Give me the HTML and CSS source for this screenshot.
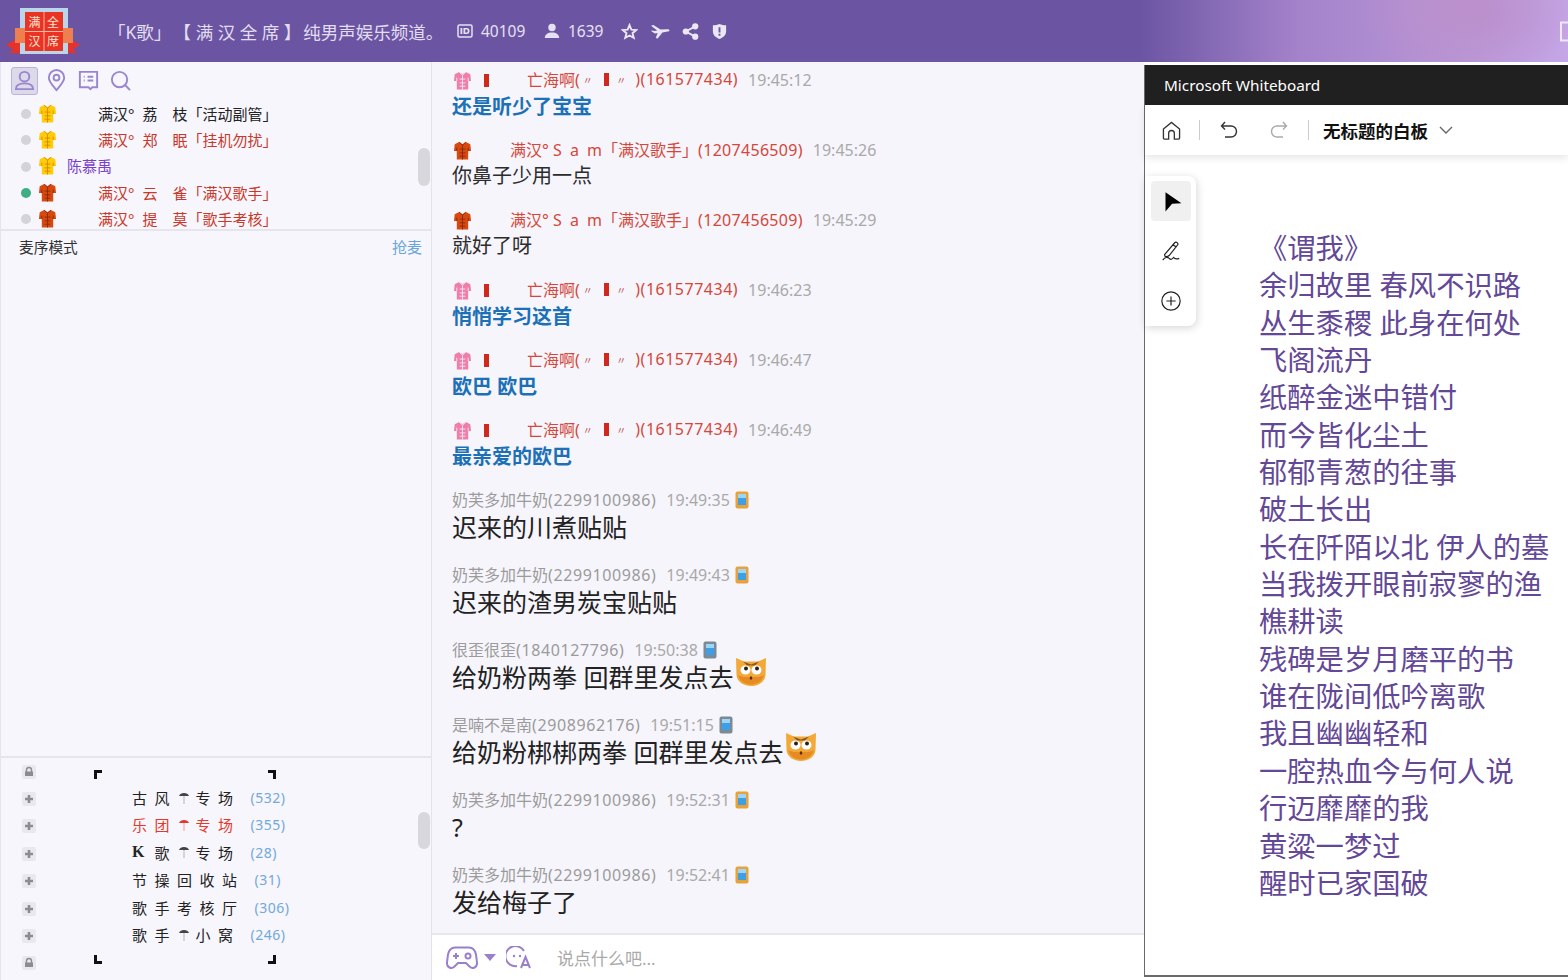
FILE: index.html
```html
<!DOCTYPE html>
<html lang="zh-CN">
<head>
<meta charset="utf-8">
<title>满汉全席</title>
<link rel="stylesheet" href="styles.css">
</head>
<body>
<svg class="defs" width="0" height="0" aria-hidden="true">
  <symbol id="shirt" viewBox="0 0 20 20">
    <path class="s-body" d="M6.500 1 1.800 3.500 1 10.500h3V19.500h12V10.500h3l-.8-7L13.500 1 10 3.500z"/>
    <path class="s-line" d="M6.500 1 10 4.500 13.500 1M10 4.500v15M4 7v3.500M16 7v3.500M7 8.500h6M7 12.500h6M7 16h6" fill="none"/>
  </symbol>
  <symbol id="phone" viewBox="0 0 14 18">
    <rect class="p-edge" x=".5" y=".5" width="13" height="17" rx="2"/>
    <rect x="3" y="3" width="8" height="11" fill="#3f9fe6"/>
    <rect x="3" y="3" width="8" height="4" fill="#9dd5f7"/>
  </symbol>
  <symbol id="cat" viewBox="0 0 32 30">
    <path d="M1 1 9 4.500h14L31 1l-.5 17C30 25 23 29 16 29S2 25 1.500 18z" fill="#f2a93a"/>
    <path d="M3 18c2 7 8 9.500 13 9.500S27 25 29 18c-3 3-23 3-26 0z" fill="#e68a22"/>
    <path d="M8 4.500l8 3 8-3-4 4h-8z" fill="#8a5a1c"/>
    <ellipse cx="10.500" cy="13" rx="5" ry="4.500" fill="#fff"/><ellipse cx="21.500" cy="13" rx="5" ry="4.500" fill="#fff"/>
    <circle cx="11" cy="11.500" r="2" fill="#2a2018"/><circle cx="22" cy="11.500" r="2" fill="#2a2018"/>
    <ellipse cx="16" cy="21" rx="1.300" ry="1.800" fill="#5b2d0a"/>
  </symbol>
  <symbol id="plus" viewBox="0 0 14 14">
    <rect width="14" height="14" rx="2" fill="#e9e8ee"/>
    <path d="M7 3v8M3 7h8" stroke="#8c8c90" stroke-width="2.600"/>
  </symbol>
  <symbol id="lock" viewBox="0 0 14 14">
    <rect width="14" height="14" rx="2" fill="#e9e8ee"/>
    <path d="M4.500 7V5a2.500 2.500 0 0 1 5 0v2" fill="none" stroke="#8c8c90" stroke-width="1.400"/>
    <rect x="3" y="6.500" width="8" height="4.500" fill="#8c8c90"/>
  </symbol>
  <symbol id="brolly" viewBox="0 0 12 16">
    <path class="b-top" d="M1 6C2 2 10 2 11 6z"/>
    <path class="b-pole" d="M6 6v8" stroke-width="1.400"/>
  </symbol>
</svg>

<header class="topbar">
  <svg class="logo" viewBox="0 0 76 50" aria-label="满汉全席">
    <path d="M1 39 11 33l8 4v11l-8-1H4l4-4z" fill="#e5322a"/>
    <path d="M75 39 65 33l-8 4v11l8-1h7l-4-4z" fill="#e5322a"/>
    <rect x="15" y="2" width="48" height="46" fill="#b9d6ea"/>
    <rect x="20" y="6" width="38" height="39" fill="#ea3322"/>
    <path d="M39 6v39M20 25.500h38" stroke="#f5b9a8" stroke-width="1"/>
    <rect x="10" y="22" width="10" height="15" fill="#ee7f4e"/>
    <rect x="58" y="22" width="10" height="15" fill="#ee7f4e"/>
    <g class="logo-text">
      <text x="29.500" y="21">满</text><text x="48" y="21">全</text>
      <text x="29.500" y="40">汉</text><text x="48" y="40">席</text>
    </g>
  </svg>
  <h1 class="title">「K歌」<span class="title-b">【 满 汉 全 席 】</span><span class="title-c">纯男声娱乐频道。</span></h1>
  <div class="stat stat-id">
    <svg class="hicon" viewBox="0 0 16 16"><rect class="id-frame" x="1" y="2" width="14" height="12" rx="1.500"/><path d="M3.500 5h1.800v6H3.500zM6.500 5h3c2 0 3 1.300 3 3s-1 3-3 3h-3zM8.200 6.500v3h1.300c.9 0 1.300-.6 1.300-1.500s-.4-1.500-1.300-1.500z" fill-rule="evenodd"/></svg>
    <span>40109</span>
  </div>
  <div class="stat stat-user">
    <svg class="hicon" viewBox="0 0 16 16"><circle cx="8" cy="4.500" r="3.700"/><path d="M.8 15c0-3.500 3-5.500 7.200-5.500s7.200 2 7.200 5.500z"/></svg>
    <span>1639</span>
  </div>
  <div class="actions">
    <svg class="aicon" viewBox="0 0 18 18"><path d="M9 2.200 11 7l5.200.4-4 3.400 1.300 5L9 13.200 4.500 15.800l1.300-5-4-3.400L7 7z" fill="none" stroke="currentColor" stroke-width="2"/></svg>
    <svg class="aicon plane" viewBox="0 0 22 18"><path d="M1 3 3.500 2 11 7l7-.5c3 0 3.500 2 .5 2.500l-5.500 1-5 6.500-2-.5 2-5.500-3 .5L1 8.500 2 8l2.700.4L7.500 8z"/></svg>
    <svg class="aicon" viewBox="0 0 18 18"><circle cx="14" cy="3.500" r="3.300"/><circle cx="4" cy="9" r="3.300"/><circle cx="14" cy="14.500" r="3.300"/><path d="M14 3.500 4 9l10 5.500" fill="none" stroke="currentColor" stroke-width="2"/></svg>
    <svg class="aicon" viewBox="0 0 16 18"><path fill-rule="evenodd" d="M8 1c2 1 4.500 1.500 7 1.500V9c0 4-3.500 6.500-7 8-3.500-1.500-7-4-7-8V2.500C3.500 2.500 6 2 8 1zM7 4.500v5.500h2V4.500zM7 11.500v2h2v-2z"/></svg>
  </div>
  <svg class="cut-icon" viewBox="0 0 16 20"><path d="M15 1H1v18h14" fill="none" stroke="currentColor" stroke-width="2"/></svg>
</header>

<main class="layout">
  <aside class="side">
    <nav class="tabs">
      <span class="tab tab-on"><svg viewBox="0 0 24 24"><circle cx="12" cy="8" r="5"/><path d="M3 21c0-4 3-6 9-6s9 2 9 6z"/></svg></span>
      <span class="tab"><svg viewBox="0 0 24 24"><path d="M12 22C7 16 4 13 4 9a8 8 0 0 1 16 0c0 4-3 7-8 13z"/><circle cx="12" cy="9" r="3"/></svg></span>
      <span class="tab"><svg viewBox="0 0 24 24"><path d="M3 3h18v16h-5l-2 2-2-2H3z"/><path d="M7 8h1M11 8h6M7 12h1M11 12h6"/></svg></span>
      <span class="tab"><svg viewBox="0 0 24 24"><circle cx="11" cy="11" r="8"/><path d="M17 17l5 5"/></svg></span>
    </nav>
    <ul class="users">
      <li class="user"><i class="dot"></i><svg class="shirt gold"><use href="#shirt"/></svg><span class="uname">满汉°<span class="nick">荔　枝</span>「活动副管」</span></li>
      <li class="user red"><i class="dot"></i><svg class="shirt gold"><use href="#shirt"/></svg><span class="uname">满汉°<span class="nick">郑　眠</span>「挂机勿扰」</span></li>
      <li class="user violet"><i class="dot"></i><svg class="shirt gold"><use href="#shirt"/></svg><span class="uname plain">陈慕禹</span></li>
      <li class="user red"><i class="dot live"></i><svg class="shirt rust"><use href="#shirt"/></svg><span class="uname">满汉°<span class="nick">云　雀</span>「满汉歌手」</span></li>
      <li class="user red"><i class="dot"></i><svg class="shirt rust"><use href="#shirt"/></svg><span class="uname">满汉°<span class="nick">提　莫</span>「歌手考核」</span></li>
    </ul>
    <i class="thumb thumb-users"></i>
    <section class="queue">
      <div class="queue-head"><span>麦序模式</span><a class="grab">抢麦</a></div>
    </section>
    <section class="tree">
      <div class="branch"><svg class="node"><use href="#lock"/></svg><div class="frame frame-top"><i class="corner c-tl"></i><i class="corner c-tr"></i></div></div>
      <div class="branch"><svg class="node"><use href="#plus"/></svg><span class="ch">古风<svg class="brolly"><use href="#brolly"/></svg>专场</span><span class="cnt">(532)</span></div>
      <div class="branch hot"><svg class="node"><use href="#plus"/></svg><span class="ch">乐团<svg class="brolly"><use href="#brolly"/></svg>专场</span><span class="cnt">(355)</span></div>
      <div class="branch"><svg class="node"><use href="#plus"/></svg><span class="ch"><b class="k">K</b>歌<svg class="brolly"><use href="#brolly"/></svg>专场</span><span class="cnt">(28)</span></div>
      <div class="branch"><svg class="node"><use href="#plus"/></svg><span class="ch">节操回收站</span><span class="cnt">(31)</span></div>
      <div class="branch"><svg class="node"><use href="#plus"/></svg><span class="ch">歌手考核厅</span><span class="cnt">(306)</span></div>
      <div class="branch"><svg class="node"><use href="#plus"/></svg><span class="ch">歌手<svg class="brolly"><use href="#brolly"/></svg>小窝</span><span class="cnt">(246)</span></div>
      <div class="branch"><svg class="node"><use href="#lock"/></svg><div class="frame frame-end"><i class="corner c-bl"></i><i class="corner c-br"></i></div></div>
      <i class="thumb thumb-tree"></i>
    </section>
  </aside>

  <section class="chat">
    <div class="log">
      <article class="msg"><div class="head red-h"><svg class="shirt pink"><use href="#shirt"/></svg><i class="rbar"></i><span class="who who-hai">亡海啊(<small class="ditto">〃</small><i class="rbar"></i><small class="ditto">〃</small><span class="qq">)(161577434)</span></span><time>19:45:12</time></div><p class="txt bold">还是听少了宝宝</p></article>
      <article class="msg"><div class="head red-h"><svg class="shirt rust"><use href="#shirt"/></svg><span class="who who-sam">满汉° <span class="sam">S a m</span>「满汉歌手」<span class="qq">(1207456509)</span></span><time>19:45:26</time></div><p class="txt">你鼻子少用一点</p></article>
      <article class="msg"><div class="head red-h"><svg class="shirt rust"><use href="#shirt"/></svg><span class="who who-sam">满汉° <span class="sam">S a m</span>「满汉歌手」<span class="qq">(1207456509)</span></span><time>19:45:29</time></div><p class="txt">就好了呀</p></article>
      <article class="msg"><div class="head red-h"><svg class="shirt pink"><use href="#shirt"/></svg><i class="rbar"></i><span class="who who-hai">亡海啊(<small class="ditto">〃</small><i class="rbar"></i><small class="ditto">〃</small><span class="qq">)(161577434)</span></span><time>19:46:23</time></div><p class="txt bold">悄悄学习这首</p></article>
      <article class="msg"><div class="head red-h"><svg class="shirt pink"><use href="#shirt"/></svg><i class="rbar"></i><span class="who who-hai">亡海啊(<small class="ditto">〃</small><i class="rbar"></i><small class="ditto">〃</small><span class="qq">)(161577434)</span></span><time>19:46:47</time></div><p class="txt bold">欧巴 欧巴</p></article>
      <article class="msg"><div class="head red-h"><svg class="shirt pink"><use href="#shirt"/></svg><i class="rbar"></i><span class="who who-hai">亡海啊(<small class="ditto">〃</small><i class="rbar"></i><small class="ditto">〃</small><span class="qq">)(161577434)</span></span><time>19:46:49</time></div><p class="txt bold">最亲爱的欧巴</p></article>
      <article class="msg big"><div class="head"><span class="who">奶芙多加牛奶<span class="qq">(2299100986)</span></span><time>19:49:35</time><svg class="phone orange"><use href="#phone"/></svg></div><p class="txt">迟来的川煮贴贴</p></article>
      <article class="msg big"><div class="head"><span class="who">奶芙多加牛奶<span class="qq">(2299100986)</span></span><time>19:49:43</time><svg class="phone orange"><use href="#phone"/></svg></div><p class="txt">迟来的渣男炭宝贴贴</p></article>
      <article class="msg big"><div class="head"><span class="who">很歪很歪<span class="qq">(1840127796)</span></span><time>19:50:38</time><svg class="phone"><use href="#phone"/></svg></div><p class="txt">给奶粉两拳 回群里发点去<svg class="cat"><use href="#cat"/></svg></p></article>
      <article class="msg big"><div class="head"><span class="who">是喃不是南<span class="qq">(2908962176)</span></span><time>19:51:15</time><svg class="phone"><use href="#phone"/></svg></div><p class="txt">给奶粉梆梆两拳 回群里发点去<svg class="cat"><use href="#cat"/></svg></p></article>
      <article class="msg big"><div class="head"><span class="who">奶芙多加牛奶<span class="qq">(2299100986)</span></span><time>19:52:31</time><svg class="phone orange"><use href="#phone"/></svg></div><p class="txt">?</p></article>
      <article class="msg big"><div class="head"><span class="who">奶芙多加牛奶<span class="qq">(2299100986)</span></span><time>19:52:41</time><svg class="phone orange"><use href="#phone"/></svg></div><p class="txt">发给梅子了</p></article>
    </div>
    <footer class="composer">
      <svg class="pad" viewBox="0 0 32 24"><path d="M9 1.500h14c4 0 6 2.500 7 7l1 8c.5 5-4.500 7-7.500 4L20 17h-8l-3.500 3.500C5.500 23.500.5 21.500 1 16.500l1-8c1-4.500 3-7 7-7z"/><path d="M7 10h6M10 7v6"/><circle cx="22" cy="10" r="2.500"/></svg>
      <i class="caret"></i>
      <svg class="trans" viewBox="0 0 26 24"><path d="M18 5A10 10 0 1 0 11 20"/><circle cx="8" cy="10" r="1.200" class="fill"/><circle cx="14" cy="10" r="1.200" class="fill"/><path d="M15 22 19.500 11 24 22M16.500 19h6"/></svg>
      <span class="placeholder">说点什么吧...</span>
    </footer>
  </section>

  <section class="board">
    <div class="wb-title">Microsoft Whiteboard</div>
    <div class="wb-bar">
      <svg class="wb-i home" viewBox="0 0 20 20"><path d="M1.500 8.500 10 1.500l8.500 7V18a1 1 0 0 1-1 1H13v-6a3 3 0 0 0-6 0v6H2.500a1 1 0 0 1-1-1z"/></svg>
      <i class="wb-sep"></i>
      <svg class="wb-i undo" viewBox="0 0 18 18"><path d="M5 1 1.500 5 5 8.500M1.500 5H11a5.500 5.500 0 0 1 0 11H5"/></svg>
      <svg class="wb-i redo" viewBox="0 0 18 18"><path d="M13 1l3.500 4L13 8.500M16.500 5H7a5.500 5.500 0 0 0 0 11h6"/></svg>
      <i class="wb-sep sep2"></i>
      <strong class="wb-name">无标题的白板</strong>
      <svg class="wb-i chev" viewBox="0 0 14 8"><path d="M1 1l6 6 6-6"/></svg>
    </div>
    <div class="canvas">
      <div class="tools">
        <span class="tool tool-on"><svg viewBox="0 0 20 20"><path class="solid" d="M5 2l14.500 10-8.500.5L5 19.500z"/></svg></span>
        <span class="tool"><svg viewBox="0 0 24 24"><path d="M5 16 16 3c1.500-1.500 4 0 3.500 2L10 17c-2 1.500-5 2-5-1zM14 5l4 3M3 22c2-3 5-4 7-2s3 1 5-1c1 2 3 2 6 1"/></svg></span>
        <span class="tool"><svg viewBox="0 0 24 24"><circle cx="12" cy="12" r="10"/><path d="M12 7v10M7 12h10"/></svg></span>
      </div>
      <div class="poem">
        <div>《谓我》</div>
        <div>余归故里 春风不识路</div>
        <div>丛生黍稷 此身在何处</div>
        <div>飞阁流丹</div>
        <div>纸醉金迷中错付</div>
        <div>而今皆化尘土</div>
        <div>郁郁青葱的往事</div>
        <div>破土长出</div>
        <div>长在阡陌以北 伊人的墓</div>
        <div>当我拨开眼前寂寥的渔</div>
        <div>樵耕读</div>
        <div>残碑是岁月磨平的书</div>
        <div>谁在陇间低吟离歌</div>
        <div>我且幽幽轻和</div>
        <div>一腔热血今与何人说</div>
        <div>行迈靡靡的我</div>
        <div>黄粱一梦过</div>
        <div>醒时已家国破</div>
      </div>
    </div>
  </section>
</main>
</body>
</html>
```

FILE: styles.css
```css
* { box-sizing: border-box; }
html, body { margin: 0; height: 100%; }
body {
  width: 1568px;
  height: 980px;
  overflow: hidden;
  display: flex;
  flex-direction: column;
  background: #fff;
  color: #222;
  font-family: "Noto Sans", "Noto Sans CJK SC", sans-serif;
}
.defs { position: absolute; }
ul, p, h1 { margin: 0; padding: 0; }
i { display: block; }

/* top bar */
.topbar {
  flex: none;
  height: 62px;
  display: flex;
  align-items: center;
  color: #e6e1f2;
  background:
    radial-gradient(ellipse 110px 70px at 1470px 10px, #bb8fca 0%, rgba(187,143,202,0) 100%),
    linear-gradient(90deg, #6b55a3 0, #6b55a3 1140px, #7a61ad 1180px, #a583cb 1300px, #b795d6 1450px, #c5a6e6 1568px);
}
.logo { flex: none; align-self: flex-start; width: 76px; height: 50px; margin-left: 5px; margin-top: 6px; }
.logo-text text { font-size: 12px; fill: #fbe3d6; text-anchor: middle; }
.title {
  margin-left: 27px;
  width: 347px;
  font-size: 17.500px;
  font-weight: 400;
  white-space: nowrap;
  color: #e2ddf0;
}
.title-b { margin-left: 11px; }
.title-c { margin-left: 2px; }
.stat { display: flex; align-items: center; font-size: 15.500px; }
.hicon { width: 16px; height: 16px; fill: currentColor; margin-right: 8px; }
.id-frame { fill: none; stroke: currentColor; stroke-width: 1.500; }
.stat-id { margin-left: 2px; width: 87px; }
.stat-user { width: 77px; }
.actions { display: flex; align-items: center; gap: 11.500px; color: #ebe7f5; }
.aicon { width: 17px; height: 17px; fill: currentColor; }
.plane { width: 21px; }
.cut-icon { position: absolute; left: 1560px; top: 21px; width: 16px; height: 21px; color: #efe6fa; }

.layout { flex: 1; display: flex; min-height: 0; }

/* left column */
.side {
  position: relative;
  flex: none;
  width: 432px;
  display: flex;
  flex-direction: column;
  background: #f7f6fc;
  border-left: 1px solid #e6e4ee;
  border-right: 1px solid #e4e3ea;
}
.tabs { display: flex; align-items: center; gap: 5px; height: 34px; padding: 3px 0 0 10px; }
.tab { width: 27px; height: 28px; display: flex; align-items: center; justify-content: center; border-radius: 3px; }
.tab svg { width: 23px; height: 23px; fill: none; stroke: #9a86cf; stroke-width: 2; }
.tab-on { background: #dcd9e8; border: 1px solid #bdb2dd; }
.users { list-style: none; height: 135px; padding-top: 5px; overflow: hidden; border-bottom: 2px solid #e6e5ec; }
.user { display: flex; align-items: center; height: 26.300px; font-size: 15px; color: #222; }
.user.red { color: #c8392b; }
.user.violet { color: #7a3fc8; }
.dot { flex: none; width: 10px; height: 10px; margin-left: 20px; border-radius: 50%; background: #d4d3d8; }
.dot.live { background: #3eae84; }
.shirt { flex: none; width: 19px; height: 19px; }
.user .shirt { margin: 0 0 2px 7px; }
.s-body { fill: var(--shirt-fill); }
.s-line { stroke: var(--shirt-line); stroke-width: 1; }
.gold { --shirt-fill: #ffcc0a; --shirt-line: #d88a00; }
.rust { --shirt-fill: #d8490f; --shirt-line: #8c2a08; }
.pink { --shirt-fill: #ee7faa; --shirt-line: #fbe3ec; }
.uname { margin: 0 0 2px 41px; white-space: nowrap; }
.uname.plain { margin-left: 10px; }
.nick { margin-left: 8px; }
.thumb { position: absolute; left: 417px; width: 12px; border-radius: 6px; background: #d8d7dc; }
.thumb-users { top: 86px; height: 38px; }
.queue { flex: 1; border-bottom: 2px solid #e6e5ec; }
.queue-head { display: flex; justify-content: space-between; align-items: center; padding: 5px 9px 0 18px; font-size: 14.700px; color: #333; }
.grab { color: #6aa6da; font-size: 15px; }
.tree { position: relative; flex: none; height: 222px; }
.branch { display: flex; align-items: center; height: 27.400px; font-size: 15px; color: #222; white-space: nowrap; }
.branch.hot { color: #e5392c; }
.node { flex: none; width: 14px; height: 14px; margin-left: 21px; }
.ch { margin: 0 0 3px 96px; letter-spacing: 7.500px; display: flex; align-items: center; }
.k { font-family: "Liberation Serif", serif; font-weight: 700; font-size: 16px; width: 22.500px; letter-spacing: 0; }
.brolly { width: 12px; height: 16px; margin: 0 5.500px 0 1px; }
.b-top { fill: var(--brolly-top, #444); }
.b-pole { stroke: var(--brolly-pole, #c6c6c6); }
.hot { --brolly-top: #e5392c; --brolly-pole: #f2b7b0; }
.cnt { margin: 0 0 3px 10px; font-size: 14px; letter-spacing: .5px; color: #72a9d8; }
.frame { display: flex; justify-content: space-between; width: 182px; margin-left: 58px; }
.frame-top { margin-top: 5px; }
.frame-end { margin-top: -7px; }
.corner { width: 8px; height: 9px; border: 0 solid #111; }
.c-tl { border-width: 3px 0 0 3px; }
.c-tr { border-width: 3px 3px 0 0; }
.c-bl { border-width: 0 0 3px 3px; }
.c-br { border-width: 0 3px 3px 0; }
.thumb-tree { top: 54px; height: 37px; }

/* chat */
.chat { flex: none; width: 712px; display: flex; flex-direction: column; background: #f6f5fb; }
.log { flex: 1; padding: 5px 0 0 20px; overflow: hidden; }
.msg { height: 70px; }
.msg.big { height: 75px; }
.head { display: flex; align-items: center; height: 26px; font-size: 16px; color: #9b9b9b; white-space: nowrap; }
.red-h { color: #d5473a; }
.who { margin-bottom: 2px; }
.head time { margin-left: 10px; color: #a9a9a9; }
.head .shirt { margin-left: 1px; }
.rbar { width: 5px; height: 13px; background: #d0281c; }
.head > .rbar { margin-left: 12px; }
.who-hai { display: flex; align-items: center; margin-left: 38px; }
.who-sam { margin-left: 38px; }
.sam { word-spacing: 4px; }
.qq { letter-spacing: .6px; }
.red-h .qq { letter-spacing: .3px; }
.red-h .who-hai .qq { letter-spacing: .5px; margin-left: .5px; }
.ditto { font-size: 10px; margin: 0 11px 0 3px; color: #b55; }
.rbar + .ditto { margin: 0 8.500px 0 7.500px; }
.txt { font-size: 20px; line-height: 26px; color: #2c2c2c; white-space: nowrap; }
.big .txt { font-size: 25px; line-height: 30px; margin-top: -1px; color: #222; }
.bold { font-weight: 700; color: #1c70b6; padding-top: 1px; }
.phone { width: 14px; height: 18px; margin-left: 5px; }
.p-edge { fill: var(--phone-edge, #7b8a94); }
.orange { --phone-edge: #e8a23a; }
.cat { width: 32px; height: 30px; vertical-align: 0; margin: -20px 0 0 1px; }

.composer {
  flex: none;
  height: 47px;
  display: flex;
  align-items: center;
  padding-left: 14px;
  background: #fff;
  border-top: 2px solid #e8e7ed;
}
.pad { width: 32px; height: 26px; fill: none; stroke: #9a80cc; stroke-width: 2; }
.caret { width: 0; height: 0; margin-left: 6px; border: 6px solid transparent; border-top: 7px solid #9a80cc; border-bottom: 0; }
.trans { width: 26px; height: 24px; margin-left: 10px; fill: none; stroke: #9a80cc; stroke-width: 2; }
.trans .fill { fill: #9a80cc; stroke: none; }
.placeholder { margin-left: 25px; font-size: 17px; color: #aaa; }

/* whiteboard window */
.board {
  flex: none;
  width: 424px;
  margin-top: 3px;
  height: 912px;
  display: flex;
  flex-direction: column;
  background: #fff;
  border-left: 1px solid #6a6a6a;
  border-bottom: 2px solid #6a6a6a;
}
.wb-title { flex: none; height: 40px; padding-left: 19px; line-height: 40px; font-size: 15.300px; color: #fff; background: #202020; }
.wb-bar {
  position: relative;
  z-index: 1;
  flex: none;
  height: 50px;
  display: flex;
  align-items: center;
  background: #fff;
  box-shadow: 0 3px 8px rgba(0,0,0,.1);
}
.wb-i { fill: none; stroke: #333; stroke-width: 1.400; }
.home { width: 19px; height: 19px; margin-left: 17px; }
.wb-sep { width: 1px; height: 20px; background: #ccc; margin-left: 18px; }
.undo { width: 18px; height: 18px; margin-left: 20px; }
.redo { width: 18px; height: 18px; margin-left: 32px; stroke: #aaa; }
.sep2 { margin-left: 20px; }
.wb-name { margin-left: 14px; font-size: 17.500px; color: #111; }
.chev { width: 14px; height: 8px; margin-left: 11px; stroke: #666; }
.canvas { position: relative; flex: 1; padding: 75px 0 0 114px; }
.tools {
  position: absolute;
  left: 0;
  top: 21px;
  width: 51px;
  height: 150px;
  padding: 5px 5px 0 6px;
  display: flex;
  flex-direction: column;
  gap: 10px;
  background: #fff;
  border-radius: 0 8px 8px 0;
  box-shadow: 1px 2px 8px rgba(0,0,0,.16);
}
.tool { width: 40px; height: 40px; display: flex; align-items: center; justify-content: center; border-radius: 4px; }
.tool svg { width: 22px; height: 22px; fill: none; stroke: #222; stroke-width: 1.300; }
.tool .solid { fill: #000; stroke: none; }
.tool-on { background: #f0f0f0; }
.poem { font-size: 28.300px; line-height: 37.350px; color: #634897; white-space: nowrap; }
```
